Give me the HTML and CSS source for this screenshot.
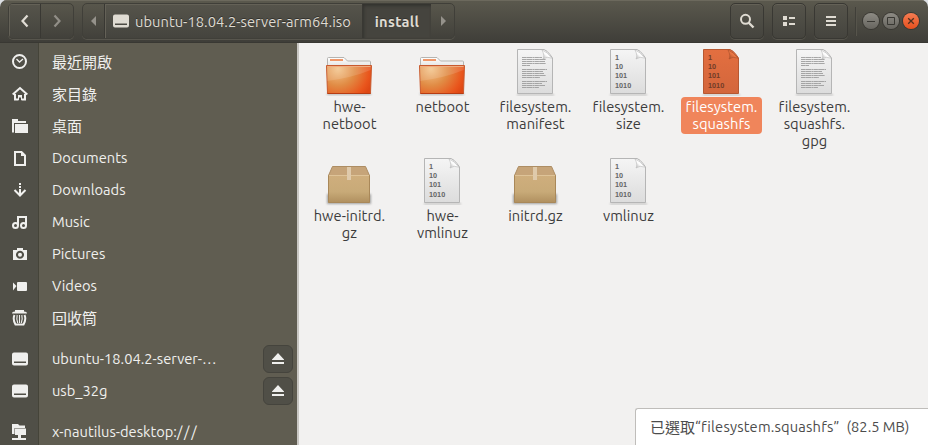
FILE: index.html
```html
<!DOCTYPE html>
<html lang="zh-Hant">
<head>
<meta charset="utf-8">
<title>install</title>
<link rel="stylesheet" href="styles.css">
</head>
<body>
<svg class="defs" width="0" height="0" aria-hidden="true">
  <defs>
    <linearGradient id="paper" x1="0" y1="0" x2="0" y2="1"><stop offset="0" stop-color="#f5f5f5"/><stop offset="1" stop-color="#dcdcdc"/></linearGradient>
    <linearGradient id="paperSel" x1="0" y1="0" x2="0" y2="1"><stop offset="0" stop-color="#e36f40"/><stop offset="1" stop-color="#d3663c"/></linearGradient>
    <linearGradient id="fold" x1="0" y1="1" x2="1" y2="0"><stop offset="0" stop-color="#aaa"/><stop offset=".45" stop-color="#fff"/><stop offset="1" stop-color="#ddd"/></linearGradient>
    <linearGradient id="foldSel" x1="0" y1="1" x2="1" y2="0"><stop offset="0" stop-color="#9c4826"/><stop offset=".5" stop-color="#ec7845"/><stop offset="1" stop-color="#c85c32"/></linearGradient>
    <radialGradient id="orange" gradientUnits="userSpaceOnUse" cx="13" cy="22" r="37"><stop offset="0" stop-color="#f2c48b"/><stop offset=".45" stop-color="#e18c45"/><stop offset=".85" stop-color="#e9551c"/><stop offset="1" stop-color="#de4814"/></radialGradient>
    <linearGradient id="back" x1="0" y1="0" x2="0" y2="1"><stop offset="0" stop-color="#fff"/><stop offset="1" stop-color="#d9d9d7"/></linearGradient>
    <linearGradient id="card" x1="0" y1="0" x2="0" y2="1"><stop offset="0" stop-color="#cfae7d"/><stop offset=".6" stop-color="#c8aa78"/><stop offset="1" stop-color="#b0905f"/></linearGradient>
    <filter id="soft" x="-20%" y="-20%" width="140%" height="140%"><feGaussianBlur stdDeviation="1"/></filter>
    <symbol id="folder" viewBox="0 0 48 50">
      <path d="M2 46h44v2H2z" fill="#777" opacity=".5" filter="url(#soft)"/>
      <path d="M2.500 23V11.500q0-1 1-1H19l3.500 3.500H44.500q1 0 1 1v8z" fill="url(#back)" stroke="#b5b4b1"/>
      <path d="M5 12h13v2H5z" fill="#f0986a"/>
      <path d="M1.500 18.500h45l-1 28H2.500z" fill="url(#orange)" stroke="#c85a2e"/>
      <path d="M2 19h44l-.3 4Q26 31 2.200 34z" fill="#fff" opacity=".13"/>
      <path d="M2.500 19.500h43" stroke="#efac80"/><path d="M2.500 46.500h43" stroke="#b73c13"/>
    </symbol>
    <symbol id="text" viewBox="0 0 48 50">
      <path d="M6 47h37v1.500H6z" fill="#777" opacity=".45" filter="url(#soft)"/>
      <path d="M6.500 2.500H33q3 1 6 5l2.500 3.500v35.500h-35z" fill="url(#paper)" stroke="#b5b5b5"/>
      <path d="M11 10.500h20M11 12.500h24M11 14.500h23M11 16.500h24M11 18.500h8M11 22.500h25M11 24.500h21M11 26.500h22M11 28.500h24M11 30.500h18M11 34.500h25M11 36.500h20M11 38.500h23M11 40.500h17" stroke="#999" stroke-opacity=".85" stroke-dasharray="4 .3 6 .3 2 .3"/>
      <path d="M31 3q3 6 1 9 4-3 9-.8-5-6.700-10-8.200z" fill="url(#fold)" stroke="#bbb" stroke-width=".6"/>
    </symbol>
    <symbol id="box" viewBox="0 0 48 50">
      <path d="M2 38h44v10H2z" fill="#555" opacity=".5" filter="url(#soft)"/>
      <path d="M7.500 10.500h33l4 9H3.500z" fill="#c6a479" stroke="#ad8d63"/>
      <path d="M3.500 19.500h41v27h-41z" fill="url(#card)" stroke="#a98859"/>
      <path d="M4 19.500h40" stroke="#dec398"/>
      <path d="M22 11h4v13h-4z" fill="#dfcaab"/>
    </symbol>
    <symbol id="drive" viewBox="0 0 16 16"><path d="M2 1.500h12q2 0 2 2v9q0 2-2 2H2q-2 0-2-2v-9q0-2 2-2zM2 10.500v1.500h12v-1.500z" fill="currentColor" fill-rule="evenodd"/></symbol>
    <symbol id="eject" viewBox="0 0 16 16"><path d="M8 2l6 6.500v.5H2v-.5zM2 11h12v2H2z" fill="currentColor"/></symbol>
  </defs>
</svg>
<div class="window">
  <header class="header">
    <div class="group nav">
      <div class="back"><svg width="16" height="16"><path d="M10.500 2.500L5.500 8l5 5.500" fill="none" stroke="#e0dcd4" stroke-width="2.200"/></svg></div>
      <div class="forward"><svg width="16" height="16"><path d="M5.500 2.500l5 5.500-5 5.500" fill="none" stroke="#918e87" stroke-width="2.200"/></svg></div>
    </div>
    <div class="group path">
      <div class="arrow left"><svg width="6" height="10"><path d="M5 0v10L0 5z" fill="#95928b"/></svg></div>
      <div class="crumb"><svg width="16" height="16"><use href="#drive"/></svg><span class="crumb-label">ubuntu-18.04.2-server-arm64.iso</span></div>
      <div class="crumb current"><span>install</span></div>
      <div class="arrow right"><svg width="6" height="10"><path d="M1 0v10l5-5z" fill="#95928b"/></svg></div>
    </div>
    <div class="tools">
      <div class="tool"><svg width="16" height="16"><circle cx="6.500" cy="6.300" r="4.500" fill="none" stroke="currentColor" stroke-width="2"/><path d="M9.500 9.500l5 5" stroke="currentColor" stroke-width="2.400"/></svg></div>
      <div class="tool"><svg width="16" height="16"><path d="M2 3h4v4H2zM2 9h4v4H2zM8 4h6v2H8zM8 10h6v2H8z" fill="currentColor"/></svg></div>
      <div class="tool"><svg width="16" height="16"><path d="M3 3h10v2H3zM3 7h10v2H3zM3 11h10v2H3z" fill="currentColor"/></svg></div>
    </div>
    <div class="separator"></div>
    <div class="controls">
      <div class="control"><svg width="16" height="16"><path d="M4 8.500h8" stroke="#393833"/></svg></div>
      <div class="control"><svg width="16" height="16"><path d="M4.500 4.500h7v7h-7z" fill="none" stroke="#393833"/></svg></div>
      <div class="control close"><svg width="16" height="16"><path d="M5.200 5.200l5.600 5.600M10.800 5.200l-5.600 5.600" stroke="#51301f" stroke-width="1.300"/></svg></div>
    </div>
  </header>
  <div class="body">
    <nav class="sidebar">
      <div class="place"><svg width="16" height="16"><circle cx="7.500" cy="7.500" r="6.500" fill="none" stroke="currentColor" stroke-width="2"/><path d="M4.500 5l3 3 3.500-3" fill="none" stroke="currentColor" stroke-width="1.300"/></svg><span class="cjk">最近開啟</span></div>
      <div class="place"><svg width="16" height="16"><path d="M.7 8.500L8 2l7.300 6.500M3 8v5.500h3.500M9.500 13.500H13V8" fill="none" stroke="currentColor" stroke-width="2"/><path d="M6 9h4v5H9v-2.500H7V14H6z" fill="currentColor"/></svg><span class="cjk">家目錄</span></div>
      <div class="place"><svg width="16" height="16"><path d="M0 1h6v2h8v2H2v9.500H0zM3 6h13v9H3z" fill="currentColor"/></svg><span class="cjk">桌面</span></div>
      <div class="place"><svg width="16" height="16"><path d="M3 2h6.500L13 5.500V15H3z" fill="none" stroke="currentColor" stroke-width="2"/><path d="M9 2v4h4z" fill="currentColor"/></svg><span class="latin">Documents</span></div>
      <div class="place"><svg width="16" height="16"><path d="M7 1h2v2H7zM7 4h2v2H7zM7 7h2v5H7z" fill="currentColor"/><path d="M2.500 8L8 13.500 13.500 8" fill="none" stroke="currentColor" stroke-width="2"/></svg><span class="latin">Downloads</span></div>
      <div class="place"><svg width="16" height="16"><path d="M6 11V3h8v8" fill="none" stroke="currentColor" stroke-width="2"/><circle cx="3.500" cy="11.500" r="2.500" fill="none" stroke="currentColor" stroke-width="2"/><circle cx="11.500" cy="11.500" r="2.500" fill="none" stroke="currentColor" stroke-width="2"/></svg><span class="latin">Music</span></div>
      <div class="place"><svg width="16" height="16"><path d="M1 4h4V2h6v2h4v10H1zM8 4.700a4 4 0 1 0 .01 0z" fill="currentColor" fill-rule="evenodd"/><circle cx="8" cy="8.700" r="2" fill="currentColor"/></svg><span class="latin">Pictures</span></div>
      <div class="place"><svg width="16" height="16"><path d="M1 4.500L4.500 8 1 12.500z" fill="currentColor"/><rect x="5" y="4" width="10" height="9" rx="1" fill="currentColor"/></svg><span class="latin">Videos</span></div>
      <div class="place"><svg width="16" height="16"><path d="M0 3.500q0-2 3-2V0h9v1.500q3 0 3 2z" fill="currentColor"/><path d="M2.500 5q-2 4 1 9.500h8q3-5.500 1-9.500" fill="none" stroke="currentColor" stroke-width="2"/><path d="M5.200 5q-1 4 .5 8M7.500 5v8M9.800 5q1 4-.5 8" fill="none" stroke="currentColor" stroke-width="1.100"/></svg><span class="cjk">回收筒</span></div>
      <div class="place section"><svg width="16" height="16"><use href="#drive"/></svg><span class="latin">ubuntu-18.04.2-server-…</span><div class="eject"><svg width="16" height="16"><use href="#eject"/></svg></div></div>
      <div class="place"><svg width="16" height="16"><use href="#drive"/></svg><span class="latin">usb_32g</span><div class="eject"><svg width="16" height="16"><use href="#eject"/></svg></div></div>
      <div class="place section"><svg width="16" height="16"><path d="M0 0h6l1.500 1.500H13V4H2.500v6H0zM3 4.500h11V11H9v3h5v2H0v-2h6v-3H3z" fill="currentColor"/></svg><span class="latin">x-nautilus-desktop:<span class="slashes">///</span></span></div>
    </nav>
    <main class="files">
      <div class="file"><svg class="icon" width="48" height="50"><use href="#folder"/></svg><div class="name">hwe-<br>netboot</div></div>
      <div class="file"><svg class="icon" width="48" height="50"><use href="#folder"/></svg><div class="name">netboot</div></div>
      <div class="file"><svg class="icon" width="48" height="50"><use href="#text"/></svg><div class="name">filesystem.<br>manifest</div></div>
      <div class="file"><svg class="icon binary" width="48" height="50"><path class="shade" d="M6 47h37v1.500H6z"/><path class="sheet" d="M6.500 2.500H33q3 1 6 5l2.500 3.500v35.500h-35z"/><path class="curl" d="M31 3q3 6 1 9 4-3 9-.8-5-6.700-10-8.200z"/><text x="11" y="13.200">1</text><text x="11" y="22.200">10</text><text x="11" y="31.400">101</text><text x="11" y="40.500">1010</text></svg><div class="name">filesystem.<br>size</div></div>
      <div class="file selected"><svg class="icon binary" width="48" height="50"><path class="shade" d="M6 47h37v1.500H6z"/><path class="sheet" d="M6.500 2.500H33q3 1 6 5l2.500 3.500v35.500h-35z"/><path class="curl" d="M31 3q3 6 1 9 4-3 9-.8-5-6.700-10-8.200z"/><text x="11" y="13.200">1</text><text x="11" y="22.200">10</text><text x="11" y="31.400">101</text><text x="11" y="40.500">1010</text></svg><div class="name">filesystem.<br>squashfs</div></div>
      <div class="file"><svg class="icon" width="48" height="50"><use href="#text"/></svg><div class="name">filesystem.<br>squashfs.<br>gpg</div></div>
      <div class="file"><svg class="icon" width="48" height="50"><use href="#box"/></svg><div class="name">hwe-initrd.<br>gz</div></div>
      <div class="file"><svg class="icon binary" width="48" height="50"><path class="shade" d="M6 47h37v1.500H6z"/><path class="sheet" d="M6.500 2.500H33q3 1 6 5l2.500 3.500v35.500h-35z"/><path class="curl" d="M31 3q3 6 1 9 4-3 9-.8-5-6.700-10-8.200z"/><text x="11" y="13.200">1</text><text x="11" y="22.200">10</text><text x="11" y="31.400">101</text><text x="11" y="40.500">1010</text></svg><div class="name">hwe-<br>vmlinuz</div></div>
      <div class="file"><svg class="icon" width="48" height="50"><use href="#box"/></svg><div class="name">initrd.gz</div></div>
      <div class="file"><svg class="icon binary" width="48" height="50"><path class="shade" d="M6 47h37v1.500H6z"/><path class="sheet" d="M6.500 2.500H33q3 1 6 5l2.500 3.500v35.500h-35z"/><path class="curl" d="M31 3q3 6 1 9 4-3 9-.8-5-6.700-10-8.200z"/><text x="11" y="13.200">1</text><text x="11" y="22.200">10</text><text x="11" y="31.400">101</text><text x="11" y="40.500">1010</text></svg><div class="name">vmlinuz</div></div>
    </main>
    <div class="status"><span class="cjk">已選取</span><span class="latin status-name">“filesystem.squashfs”</span><span class="latin status-size">(82.5 MB)</span></div>
  </div>
</div>
</body>
</html>
```
FILE: styles.css
```css
* { box-sizing: border-box; }
html { background: #dcdfe3; }
body { margin: 0; overflow: hidden; font: 14.667px/17px "Ubuntu", "Noto Sans", "Noto Sans CJK TC", sans-serif; color: #3c3c3c; }
svg { display: block; flex: none; }
.defs { position: absolute; }
.window { width: 928px; height: 445px; display: flex; flex-direction: column; border-radius: 7px 7px 0 0; overflow: hidden; }

.header { height: 43px; flex: none; display: flex; align-items: flex-start; padding: 3px 0 0 8px; color: #dfdbd2; background: linear-gradient(#5b594e, #3f3e39); border-bottom: 1px solid #393833; box-shadow: inset 0 1px #6c695d; }
.group { display: flex; height: 36px; border: 1px solid #403f39; border-radius: 5px; box-shadow: 0 1px #57554d; overflow: hidden; }
.group > div { display: flex; align-items: center; justify-content: center; }
.nav { width: 66px; }
.back { width: 32px; background: linear-gradient(#56544b, #45443e); border-right: 1px solid #393833; box-shadow: inset 1px 1px #646157; }
.forward { flex: 1; }
.path { width: 373px; margin-left: 8px; }
.arrow.left { width: 21px; }
.arrow.right { width: 23px; }
.path .crumb { width: 258px; justify-content: flex-start; padding-left: 8px; gap: 6px; background: linear-gradient(#56544b, #45443e); border-left: 1px solid #393833; box-shadow: inset 1px 1px #646157; white-space: nowrap; }
.crumb-label { letter-spacing: .05px; }
.path .crumb.current { width: 69px; padding: 0; justify-content: center; font-weight: 700; letter-spacing: .3px; background: #45443e; box-shadow: inset 1px 2px 3px #34332f; }
.crumb span { text-shadow: 0 -1px #33322e; }
.tools { display: flex; gap: 8px; margin-left: 275px; }
.tool { width: 34px; height: 36px; display: flex; align-items: center; justify-content: center; border: 1px solid #393833; border-radius: 5px; background: linear-gradient(#56544b, #45443e); box-shadow: inset 0 1px #646157, 0 1px #57554d; }
.separator { width: 2px; height: 29px; margin: 4px 0 0 7px; border-left: 1px solid #403f39; border-right: 1px solid #56544b; }
.controls { display: flex; gap: 4px; margin: 10px 0 0 6px; }
.control { width: 16px; height: 16px; border-radius: 50%; background: linear-gradient(#8d8b84, #67655f); box-shadow: 0 0 0 1px #393833; }
.control.close { background: linear-gradient(#f57c52, #e7501e); }

.body { flex: 1; min-height: 0; display: flex; position: relative; background: #f2f1f0; }
.sidebar { width: 299px; flex: none; padding-top: 3px; color: #f0f0ee; background: linear-gradient(90deg, #504f47 38px, #454439 38px 39px, #605d51 39px 297px, #c9c7c3 297px); }
.place { height: 32px; display: flex; align-items: center; padding: 0 6px 0 12px; white-space: nowrap; }
.place > span { margin-left: 24px; }
.place.section { margin-top: 9px; }
.latin { padding-bottom: 2px; }
.slashes { letter-spacing: 1.8px; }
.eject { width: 30px; height: 28px; margin-left: auto; display: flex; align-items: center; justify-content: center; border: 1px solid #45443d; border-radius: 6px; background: #504f47; }
.cjk { font-size: 15px; }

.files { flex: 1; display: grid; grid-template-columns: repeat(6, 93px); grid-auto-rows: 109px; align-content: start; padding: 4px 0 0 4px; }
.icon { margin-left: 22px; }
.name { width: 81px; margin: 0 auto; padding: 1px 0 2px; min-height: 20px; text-align: center; white-space: nowrap; border-radius: 4px; letter-spacing: .05px; }
.selected .name { color: #fff; background: #f0855b; }
.binary .sheet { fill: url(#paper); stroke: #b5b5b5; }
.binary .curl { fill: url(#fold); stroke: #bbb; stroke-width: .6; }
.binary .shade { fill: #777; opacity: .45; filter: url(#soft); }
.binary text { font: 700 7.300px "Liberation Sans", sans-serif; fill: #666; }
.selected .sheet { fill: url(#paperSel); stroke: #b65832; }
.selected .curl { fill: url(#foldSel); stroke: #a9502c; }
.selected .binary text { fill: #733c27; }

.status { position: absolute; right: 0; bottom: 0; width: 293px; height: 37px; display: flex; align-items: center; padding-left: 14px; background: #fff; border: solid #bfbdba; border-width: 1px 0 0 1px; border-radius: 3px 0 0; white-space: nowrap; color: #4c4c4c; }
.status-name { letter-spacing: .18px; }
.status-size { margin-left: 7px; }
```
